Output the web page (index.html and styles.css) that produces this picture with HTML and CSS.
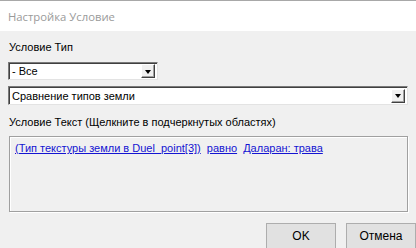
FILE: index.html
```html
<!DOCTYPE html>
<html lang="ru">
<head>
<meta charset="UTF-8">
<title>Настройка Условие</title>
<link rel="stylesheet" href="styles.css">
</head>
<body>

<div class="window">

<div class="titlebar">Настройка Условие</div>

<div class="content">
<div class="label first">Условие Тип</div>

<div class="combo short">
<span class="combo-text">- Все</span>
<span class="combo-btn"><i class="arrow"></i></span>
</div>

<div class="combo wide">
<span class="combo-text">Сравнение типов земли</span>
<span class="combo-btn"><i class="arrow"></i></span>
</div>

<div class="label">Условие Текст (Щелкните в подчеркнутых областях)</div>

<div class="textbox">
<a href="#">(Тип текстуры земли в Duel_point[3])</a>
<a href="#">равно</a>
<a href="#">Даларан: трава</a>
</div>

<div class="buttons">
<button>OK</button>
<button>Отмена</button>
</div>
</div>

</div>

</body>
</html>
```

FILE: styles.css
```css
body{
    margin:0;
    font-family:"Liberation Sans", Arial, sans-serif;
    font-size:11px;
    color:#000;
    background:#f0f0f0;
}

.window{
    width:416px;
    height:248px;
    overflow:hidden;
    border-top:1px solid #a8a8a8;
    box-sizing:border-box;
}

.titlebar{
    background:#fff;
    height:30px;
    line-height:31px;
    padding-left:8px;
    color:#9a9a9a;
    font-family:"Open Sans", "Liberation Sans", sans-serif;
    font-size:11.3px;
}

.content{
    padding:0 8px;
}

.label{
    margin-top:10px;
    padding-left:1px;
    height:14px;
    line-height:14px;
}

.label.first{
    margin-top:9px;
}

.combo{
    display:flex;
    align-items:center;
    box-sizing:border-box;
    border:1px solid;
    border-color:#7a7a7a #e3e3e3 #e3e3e3 #7a7a7a;
    box-shadow:inset 1px 1px 0 #404040;
    background:#fff;
}

.combo.short{
    width:150px;
    height:18px;
    margin-top:8px;
}

.combo.wide{
    width:400px;
    height:19px;
    margin-top:6px;
}

.combo-text{
    flex:1;
    padding-left:3px;
    line-height:16px;
}

.combo-btn{
    width:14px;
    height:14px;
    margin-right:2px;
    box-sizing:border-box;
    background:#f0f0f0;
    border:1px solid;
    border-color:#fff #404040 #404040 #fff;
    box-shadow:inset -1px -1px 0 #a0a0a0;
    display:flex;
    align-items:center;
    justify-content:center;
}

.arrow{
    display:block;
    width:0;
    height:0;
    margin-top:1px;
    border-left:3.5px solid transparent;
    border-right:3.5px solid transparent;
    border-top:4px solid #000;
}

.textbox{
    margin-top:7px;
    margin-left:1px;
    width:399px;
    height:76px;
    box-sizing:border-box;
    border:1px solid #a0a0a0;
    box-shadow:inset 1px 1px 0 #fff, 1px 1px 0 #fff;
    padding:5px 0 0 5px;
}

.textbox a{
    color:#1414d2;
    margin-right:3px;
}

.buttons{
    display:flex;
    justify-content:flex-end;
    gap:10px;
    margin-top:11px;
    margin-right:-8px;
}

button{
    width:70px;
    height:26px;
    font-family:"Liberation Sans", Arial, sans-serif;
    font-size:12px;
    background:#e1e1e1;
    border:1px solid #adadad;
    padding:0;
    color:#000;
}
```
